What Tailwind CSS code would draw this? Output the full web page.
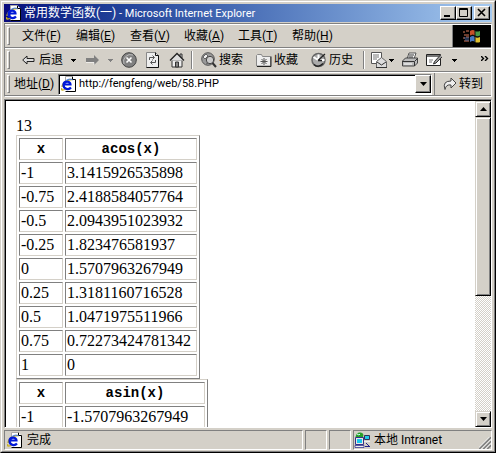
<!DOCTYPE html>
<html lang="zh-CN">
<head>
<meta charset="utf-8">
<title>常用数学函数(一) - Microsoft Internet Explorer</title>
<script src="https://cdn.jsdelivr.net/npm/@tailwindcss/browser@4"></script>
</head>
<body class="h-screen overflow-hidden bg-[#d4d0c8] font-[Roboto,'Noto_Sans_CJK_SC',sans-serif] text-xs text-black">
<svg class="hidden" aria-hidden="true">
  <symbol id="page" viewBox="0 0 16 16">
    <path d="M4.500 .5h7l3 3v12h-10z" fill="#fff"/><path d="M11.500 .5v3h3v12h-10" fill="none" stroke="#000"/><path d="M4.500 5V.5h7" fill="none" stroke="#aaa"/>
    <path d="M1 12C-1 15 3 14 5 13M1 11C1 7 6 3.500 11 3.500" fill="none" stroke="#c8b020" stroke-width="1.300"/>
    <path d="M10 11.500C8 14 2.500 13.500 2.500 9S9.500 4.500 9.500 8.500H3" fill="none" stroke="#0018d8" stroke-width="2.200"/>
    <path d="M5 4.500C7 3 10 2.500 11.500 4" fill="none" stroke="#3878f0"/>
  </symbol>
  <symbol id="down" viewBox="0 0 5 3"><path d="M0 0h5v1H0zM1 1h3v1H1zM2 2h1v1H2z" fill="currentColor" shape-rendering="crispEdges"/></symbol>
</svg>
<div class="flex h-full flex-col border border-t-[#d4d0c8] border-l-[#d4d0c8] border-r-black border-b-black">
 <div class="flex min-h-0 flex-1 flex-col border border-t-white border-l-white border-r-[#808080] border-b-[#808080] p-0.5 pb-px">
  <header class="flex h-[18px] shrink-0 items-center bg-linear-to-r from-[#0a0a7c] to-[#a6caf0] pr-0.5 text-white">
    <svg class="mr-0.5 ml-0.5 size-4"><use href="#page"/></svg>
    <h1 class="flex-1 whitespace-nowrap">常用数学函数(一)<span class="text-[11px]"> - Microsoft Internet Explorer</span></h1>
    <button aria-label="最小化" class="h-3.5 w-4 border border-white border-r-black border-b-black bg-[#d4d0c8] shadow-[inset_-1px_-1px_#808080]"><svg viewBox="0 0 14 12" class="h-3 w-3.5"><path d="M3 8h6v2H3z" fill="#000"/></svg></button>
    <button aria-label="最大化" class="mr-0.5 h-3.5 w-4 border border-white border-r-black border-b-black bg-[#d4d0c8] shadow-[inset_-1px_-1px_#808080]"><svg viewBox="0 0 14 12" class="h-3 w-3.5"><path d="M2.500 1.500h8v8h-8zM2 2.500h9" fill="none" stroke="#000"/></svg></button>
    <button aria-label="关闭" class="h-3.5 w-4 border border-white border-r-black border-b-black bg-[#d4d0c8] shadow-[inset_-1px_-1px_#808080]"><svg viewBox="0 0 14 12" class="h-3 w-3.5"><path d="M3 2l7 7M10 2l-7 7" stroke="#000" stroke-width="1.600"/></svg></button>
  </header>
  <div class="mt-px shrink-0 border border-[#808080] border-r-white border-b-white">
    <div class="flex h-6 border-t border-b border-t-white border-b-[#808080]">
      <nav class="flex flex-1 items-center gap-4 border-r border-[#808080] pl-0.5 whitespace-nowrap">
        <span class="-mr-1 h-[18px] w-[3px] border border-white border-r-[#808080] border-b-[#808080]"></span>
        <button class="w-[38px]">文件(<u>F</u>)</button><button class="w-[38px]">编辑(<u>E</u>)</button><button class="w-[38px]">查看(<u>V</u>)</button><button class="w-[38px]">收藏(<u>A</u>)</button><button class="w-[38px]">工具(<u>T</u>)</button><button class="w-[38px]">帮助(<u>H</u>)</button>
      </nav>
      <div class="flex w-[38px] items-center justify-center bg-black">
        <svg viewBox="0 0 18 16" class="h-4 w-[18px]"><path d="M7 3q3-2 5 0v5q-2-2-5 0z" fill="#c85028"/><path d="M12 3q2 1 5 0v5q-2 1-5 0z" fill="#489848"/><path d="M7 9q3-2 5 0v5q-2-2-5 0z" fill="#4878c0"/><path d="M12 9q2 1 5 0v5q-2 1-5 0z" fill="#e0c030"/><path d="M0 4h2M3 3h3M1 7h5M0 10h2M3 9h3M1 13h5" stroke="#90503c" stroke-width="1.500"/><path d="M1 10h5M2 12h4" stroke="#4868a0"/><path d="M7 8q3-2 5 0t5 0M12 3v11" fill="none" stroke="#101010"/></svg>
      </div>
    </div>
    <div class="flex h-6 items-center border-t border-b border-t-white border-b-[#808080] pl-0.5 whitespace-nowrap">
      <span class="mr-3 h-[18px] w-[3px] border border-white border-r-[#808080] border-b-[#808080]"></span>
      <button class="flex w-[49px] items-center gap-1"><svg viewBox="0 0 13 10" class="h-2.5 w-[13px]"><path d="M.7 5L5 1v2.500h7v3H5V9z" fill="#ddd" stroke="#222"/></svg>后退</button>
      <button aria-label="后退历史" class="w-[15px]"><svg class="h-[3px] w-[5px]"><use href="#down"/></svg></button>
      <button aria-label="前进" class="w-[22px]"><svg viewBox="0 0 13 10" class="h-2.5 w-[13px]"><path d="M13 5L8 0v3H0v4h8v3z" fill="#808080"/><path d="M0 7.500h8V10" fill="none" stroke="#fff" stroke-width=".6"/></svg></button>
      <button aria-label="前进历史" class="w-[13px] text-[#808080]"><svg class="h-[3px] w-[5px]"><use href="#down"/></svg></button>
      <button aria-label="停止" class="w-6"><svg viewBox="0 0 16 16" class="size-4"><circle cx="8" cy="8" r="7.300" fill="#808080" stroke="#444"/><path d="M3 12A7 7 0 0 1 12 3" fill="none" stroke="#bbb"/><path d="M5.500 5.500l5 5M10.500 5.500l-5 5" stroke="#fff" stroke-width="1.600"/></svg></button>
      <button aria-label="刷新" class="w-6"><svg viewBox="0 0 16 16" class="size-4"><path d="M1.500 .5h9l3 3v12h-12z" fill="#eee" stroke="#888"/><path d="M10.500 .5v3h3v12h-12" fill="none" stroke="#111"/><path d="M4.500 8V5.500H9M7.500 3.500l2 2-2 2M10.500 8v2.500H6M7.500 8.500l-2 2 2 2" fill="none" stroke="#555"/></svg></button>
      <button aria-label="主页" class="w-[22px]"><svg viewBox="0 0 16 16" class="size-4"><path d="M3 8h10v7H3z" fill="#eee" stroke="#333"/><path d="M11 2h2v4h-2z" fill="#ccc" stroke="#333"/><path d="M1 8.500L8 1.500l7 7" fill="#ddd" stroke="#222" stroke-width="1.300"/><path d="M6.500 10h3v5h-3z" fill="#888" stroke="#333"/></svg></button>
      <span class="mr-2 h-[18px] w-0.5 border-l border-r border-l-[#808080] border-r-white"></span>
      <button class="flex w-[55px] items-center gap-0.5"><svg viewBox="0 0 16 16" class="size-4"><circle cx="7" cy="7" r="6.300" fill="#999" stroke="#555"/><path d="M2 5l3-3 2 2-3 3zM5 12l2-1" fill="#eee" stroke="#666"/><circle cx="9" cy="8" r="3.700" fill="#ccc" stroke="#444"/><path d="M11.500 11l3.500 4" stroke="#333" stroke-width="2"/></svg>搜索</button>
      <button class="flex w-[55px] items-center gap-0.5"><svg viewBox="0 0 16 16" class="size-4"><path d="M.5 14V3.500l1-1h4l1 2h8V14z" fill="#eee" stroke="#888"/><path d="M15 4.500V14.500H1" fill="none" stroke="#222"/><path d="M8 6v7M4.500 9.500h7M5.500 7l5 5M10.500 7l-5 5" stroke="#555"/></svg>收藏</button>
      <button class="flex w-[52px] items-center gap-0.5"><svg viewBox="0 0 16 16" class="size-4"><circle cx="7.500" cy="8" r="6.500" fill="#aaa" stroke="#666" stroke-width="1.500"/><path d="M7.500 8V2.500M7.500 8h6M7 8L2.500 5" stroke="#fff" stroke-width="2"/><path d="M7 8.500l7-6.500M7 8.500h4" stroke="#222" stroke-width="1.300"/><path d="M3 12.500q4 4 9-1" fill="none" stroke="#222" stroke-width="1.500"/></svg>历史</button>
      <span class="mr-1.5 h-[18px] w-0.5 border-l border-r border-l-[#808080] border-r-white"></span>
      <button aria-label="邮件" class="flex w-[31px] items-center gap-0.5"><svg viewBox="0 0 16 16" class="size-4"><path d="M.5 .5h10v11H.5z" fill="#fff" stroke="#555"/><path d="M2 3h6M2 5h6M2 7h4" stroke="#777"/><path d="M5.500 9.500l5-4 5 4v6h-10z" fill="#ddd" stroke="#666"/><path d="M6 10l4.500 3 4.500-3M5 15.500h11" fill="none" stroke="#333"/></svg><svg class="h-[3px] w-[5px]"><use href="#down"/></svg></button>
      <button aria-label="打印" class="w-6"><svg viewBox="0 0 16 16" class="size-4"><path d="M5 7l2-6h7l-2 6z" fill="#fff" stroke="#555"/><path d="M.5 9l3-3h12v5l-3 3H.5z" fill="#bbb" stroke="#444"/><path d="M.5 9.500h12l3-3M12.500 10v4M7 3h5M6.500 5H11" fill="none" stroke="#333"/><path d="M2 12h8" stroke="#fff"/></svg></button>
      <button aria-label="编辑" class="w-[26px]"><svg viewBox="0 0 16 16" class="size-4"><path d="M.5 2.500h14v11H.5z" fill="#fff" stroke="#222"/><path d="M1 4h13" stroke="#777" stroke-width="2"/><path d="M3 8h4M3 10h3" stroke="#777"/><path d="M14.500 3L8.500 9.500 7.500 12l2.500-1L16 5" fill="#999" stroke="#333"/></svg></button>
      <button aria-label="编辑选项"><svg class="h-[3px] w-[5px]"><use href="#down"/></svg></button>
      <button aria-label="更多" class="mb-1 ml-auto pr-0.5"><svg viewBox="0 0 8 5" class="h-[5px] w-2"><path d="M0 0l2.500 2.500L0 5M4 0l2.500 2.500L4 5" fill="none" stroke="#000" stroke-width="1.400"/></svg></button>
    </div>
    <form class="flex h-6 items-center border-t border-b border-t-white border-b-[#808080] pl-0.5 whitespace-nowrap">
      <span class="mr-1 h-[18px] w-[3px] border border-white border-r-[#808080] border-b-[#808080]"></span>
      <label for="url" class="w-11">地址(<u>D</u>)</label>
      <div class="flex h-[21px] min-w-0 flex-1 items-center border border-[#808080] border-r-white border-b-white bg-white pl-0.5 shadow-[inset_1px_1px_#000]">
        <svg class="mr-0.5 size-4 shrink-0"><use href="#page"/></svg>
        <input id="url" class="min-w-0 flex-1 text-[11px] outline-none" value="http://fengfeng/web/58.PHP">
        <button type="button" aria-label="地址列表" class="flex h-[18px] w-4 items-center justify-center border border-white border-r-black border-b-black bg-[#d4d0c8] shadow-[inset_-1px_-1px_#808080]"><svg viewBox="0 0 7 4" class="h-1 w-[7px]"><path d="M0 0h7L3.500 4z"/></svg></button>
      </div>
      <button class="ml-0.5 flex h-full w-[57px] items-center gap-0.5 border-l border-[#808080] pl-2"><svg viewBox="0 0 14 14" class="size-3.5"><path d="M2 12.500Q-1 4 8 4V1l5 5-5 5V8Q3 7 2 12.500z" fill="#eee" stroke="#444"/></svg>转到</button>
    </form>
  </div>
  <main class="mt-0.5 flex min-h-0 flex-1 border border-[#808080] border-r-white border-b-white">
   <div class="flex min-w-0 flex-1 border-t border-l border-black bg-white">
    <article class="min-w-0 flex-1 overflow-hidden px-2.5 pt-4 font-['Liberation_Serif',serif] text-base leading-[18px]">
      <p>13</p>
      <table class="w-[184px] table-fixed border-separate border-spacing-0.5 border border-[#d4d0c8] border-r-[#808080] border-b-[#808080] [&_td]:border [&_td]:border-[#808080] [&_td]:border-r-[#d4d0c8] [&_td]:border-b-[#d4d0c8] [&_td]:p-px [&_th]:border [&_th]:border-[#808080] [&_th]:border-r-[#d4d0c8] [&_th]:border-b-[#d4d0c8] [&_th]:p-px [&_th]:font-['Liberation_Mono',monospace] [&_th]:text-sm [&_th]:leading-[18px]">
        <thead><tr><th class="w-11">x</th><th>acos(x)</th></tr></thead>
        <tbody>
        <tr><td>-1</td><td>3.1415926535898</td></tr>
        <tr><td>-0.75</td><td>2.4188584057764</td></tr>
        <tr><td>-0.5</td><td>2.0943951023932</td></tr>
        <tr><td>-0.25</td><td>1.823476581937</td></tr>
        <tr><td>0</td><td>1.5707963267949</td></tr>
        <tr><td>0.25</td><td>1.3181160716528</td></tr>
        <tr><td>0.5</td><td>1.0471975511966</td></tr>
        <tr><td>0.75</td><td>0.72273424781342</td></tr>
        <tr><td>1</td><td>0</td></tr>
        </tbody>
      </table>
      <table class="w-[192px] table-fixed border-separate border-spacing-0.5 border border-[#d4d0c8] border-r-[#808080] border-b-[#808080] [&_td]:border [&_td]:border-[#808080] [&_td]:border-r-[#d4d0c8] [&_td]:border-b-[#d4d0c8] [&_td]:p-px [&_th]:border [&_th]:border-[#808080] [&_th]:border-r-[#d4d0c8] [&_th]:border-b-[#d4d0c8] [&_th]:p-px [&_th]:font-['Liberation_Mono',monospace] [&_th]:text-sm [&_th]:leading-[18px]">
        <thead><tr><th class="w-11">x</th><th>asin(x)</th></tr></thead>
        <tbody><tr><td>-1</td><td>-1.5707963267949</td></tr></tbody>
      </table>
    </article>
    <div class="flex w-4 flex-col bg-[repeating-conic-gradient(#d4d0c8_0_25%,#fff_0_50%)] bg-size-[2px_2px]">
      <button aria-label="向上滚动" class="flex h-4 shrink-0 items-center justify-center border border-[#d4d0c8] border-r-black border-b-black bg-[#d4d0c8] shadow-[inset_1px_1px_#fff,inset_-1px_-1px_#808080]"><svg viewBox="0 0 7 4" class="h-1 w-[7px]"><path d="M0 4h7L3.500 0z"/></svg></button>
      <div class="h-[55%] border border-[#d4d0c8] border-r-black border-b-black bg-[#d4d0c8] shadow-[inset_1px_1px_#fff,inset_-1px_-1px_#808080]"></div>
      <button aria-label="向下滚动" class="mt-auto flex h-4 shrink-0 items-center justify-center border border-[#d4d0c8] border-r-black border-b-black bg-[#d4d0c8] shadow-[inset_1px_1px_#fff,inset_-1px_-1px_#808080]"><svg viewBox="0 0 7 4" class="h-1 w-[7px]"><path d="M0 0h7L3.500 4z"/></svg></button>
    </div>
   </div>
  </main>
  <footer class="mt-0.5 flex h-5 shrink-0 gap-0.5 whitespace-nowrap">
    <div class="flex flex-1 items-center gap-1 border border-[#808080] border-r-white border-b-white pl-0.5"><svg class="size-4"><use href="#page"/></svg>完成</div>
    <div class="w-[22px] border border-[#808080] border-r-white border-b-white"></div>
    <div class="w-[22px] border border-[#808080] border-r-white border-b-white"></div>
    <div class="flex w-[139px] items-center gap-1 border border-[#808080] border-r-white border-b-white">
      <svg viewBox="0 0 16 16" class="size-4"><path d="M10.500 3.500h5v4h-5z" fill="#20c8e8" stroke="#335"/><path d="M9 9.500h7" stroke="#eee"/><path d="M1.500 5.500h8v7h-8z" fill="#e8e8e8" stroke="#338"/><path d="M3 7h5v4H3z" fill="#18c8f0"/><path d="M1 13.500h9v2H1z" fill="#eee" stroke="#228" stroke-width=".7"/><path d="M1.500 5q1-5 5-4.500T9 5z" fill="#28a028"/><path d="M3 2l2 1 1-1" stroke="#cff" fill="none"/><path d="M11 14.500h5M12 11l3 3" fill="none" stroke="#228"/></svg>
      <span>本地 Intranet</span>
      <svg viewBox="0 0 12 12" class="mt-auto ml-auto size-3"><path d="M0 12L12 0M4 12l8-8M8 12l4-4" stroke="#808080" stroke-width="2"/><path d="M-1 11.500L11.500-1M2.500 12L12 2.500M6.500 12L12 6.500" stroke="#fff"/></svg>
    </div>
  </footer>
 </div>
</div>
</body>
</html>
